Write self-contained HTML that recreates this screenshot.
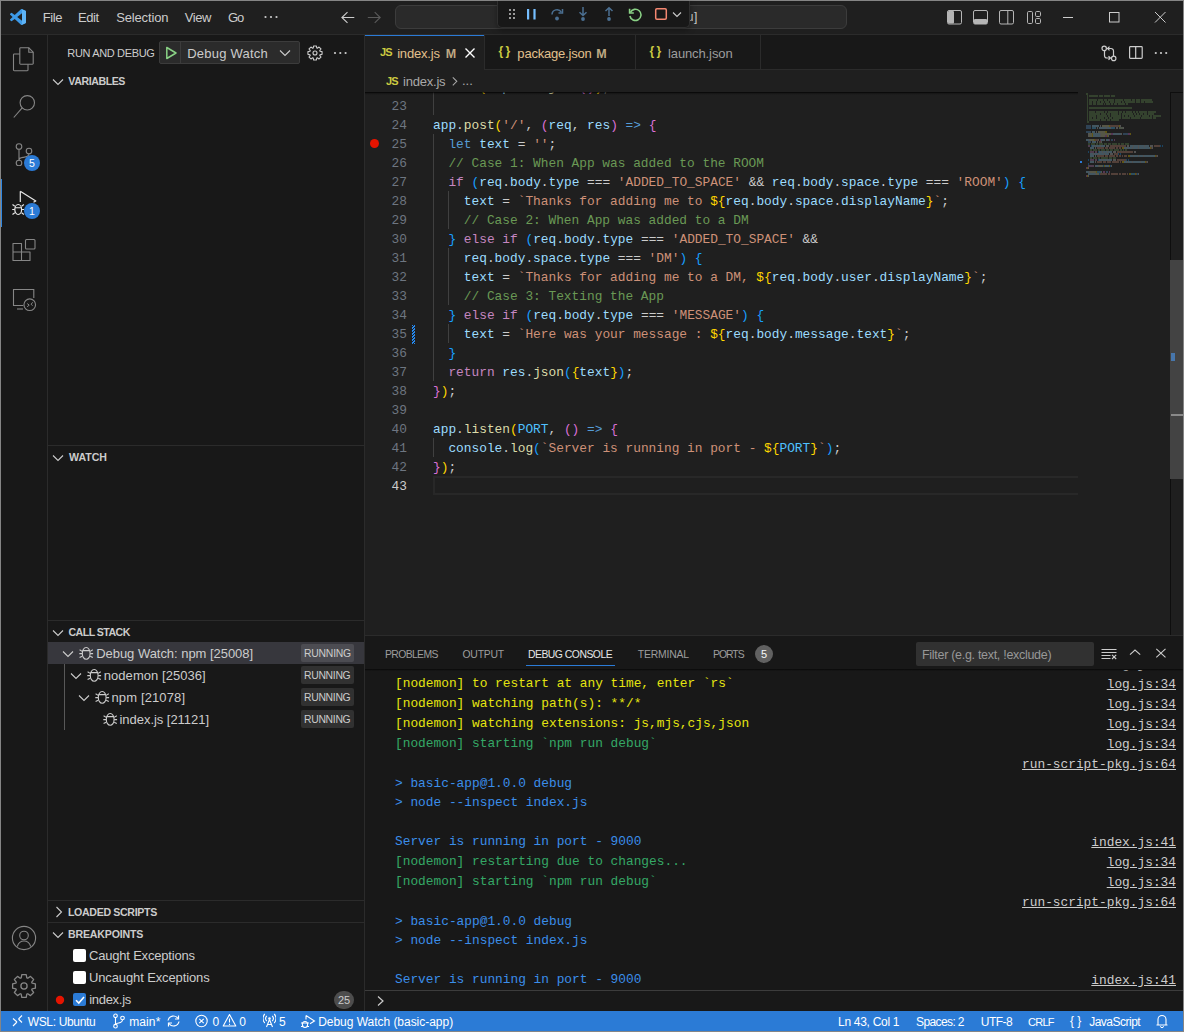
<!DOCTYPE html><html><head><meta charset="utf-8"><style>
html,body{margin:0;padding:0;}body{width:1184px;height:1032px;position:relative;overflow:hidden;background:#858585;font-family:"Liberation Sans",sans-serif;}
div{box-sizing:border-box;}
</style></head><body>
<div style="position:absolute;left:1px;top:1px;width:1182px;height:1030px;background:#181818;"></div>
<div style="position:absolute;left:1px;top:1px;width:1182px;height:33px;background:#1f1f1f;"></div>
<div style="position:absolute;left:1px;top:34px;width:1182px;height:1px;background:#2b2b2b;"></div>
<div style="position:absolute;left:47px;top:35px;width:1px;height:976px;background:#2b2b2b;"></div>
<div style="position:absolute;left:364px;top:35px;width:1px;height:976px;background:#2b2b2b;"></div>
<div style="position:absolute;left:365px;top:35px;width:818px;height:600px;background:#1f1f1f;"></div>
<div style="position:absolute;left:365px;top:635px;width:818px;height:1px;background:#2b2b2b;"></div>
<div style="position:absolute;left:365px;top:636px;width:818px;height:375px;background:#181818;"></div>
<div style="position:absolute;left:1px;top:1011px;width:1182px;height:20px;background:#2b7bd6;"></div>
<svg style="position:absolute;left:10px;top:9px;" width="16" height="16" viewBox="0 0 100 100"><path fill="#3d9ae8" d="M96.46 10.8 75.86.87a6.23 6.23 0 0 0-7.1 1.2L29.35 38.04 12.17 25a4.16 4.16 0 0 0-5.32.24L1.34 30.25a4.16 4.16 0 0 0 0 6.15L16.24 50 1.34 63.6a4.16 4.16 0 0 0 0 6.15l5.51 5.01a4.16 4.16 0 0 0 5.32.24l17.18-13.04 39.41 35.96a6.23 6.23 0 0 0 7.1 1.2l20.6-9.91a6.24 6.24 0 0 0 3.54-5.62V16.42a6.24 6.24 0 0 0-3.54-5.62zM75.01 72.7 45.11 50l29.9-22.7z"/><path fill="#5db3f5" d="M68.76 2.07a6.23 6.23 0 0 1 7.1-1.2l20.6 9.93a6.24 6.24 0 0 1 3.54 5.62v67.16a6.24 6.24 0 0 1-3.54 5.62l-20.6 9.91a6.23 6.23 0 0 1-7.1-1.2 3.66 3.66 0 0 0 6.25-2.58V4.66a3.66 3.66 0 0 0-6.25-2.59z"/></svg>
<div id="t1" style="position:absolute;left:42.66px;top:11px;white-space:pre;font-family:'Liberation Sans', sans-serif;font-size:13px;line-height:13px;color:#cccccc;font-weight:normal;letter-spacing:-0.337px;">File</div>
<div id="t2" style="position:absolute;left:78.01px;top:11px;white-space:pre;font-family:'Liberation Sans', sans-serif;font-size:13px;line-height:13px;color:#cccccc;font-weight:normal;letter-spacing:-0.390px;">Edit</div>
<div id="t3" style="position:absolute;left:116.19px;top:11px;white-space:pre;font-family:'Liberation Sans', sans-serif;font-size:13px;line-height:13px;color:#cccccc;font-weight:normal;letter-spacing:-0.150px;">Selection</div>
<div id="t4" style="position:absolute;left:184.84px;top:11px;white-space:pre;font-family:'Liberation Sans', sans-serif;font-size:13px;line-height:13px;color:#cccccc;font-weight:normal;letter-spacing:-0.500px;">View</div>
<div id="t5" style="position:absolute;left:228.00px;top:11px;white-space:pre;font-family:'Liberation Sans', sans-serif;font-size:13px;line-height:13px;color:#cccccc;font-weight:normal;letter-spacing:-1.000px;">Go</div>
<svg style="position:absolute;left:263px;top:15px;" width="16" height="4" viewBox="0 0 16 4"><circle cx="2.5" cy="2" r="1.1" fill="#cccccc"/><circle cx="8" cy="2" r="1.1" fill="#cccccc"/><circle cx="13.5" cy="2" r="1.1" fill="#cccccc"/></svg>
<svg style="position:absolute;left:339px;top:9px;" width="16" height="16" viewBox="0 0 16 16"><path d="M15.3 8.5H2.8M8.5 3.2 2.9 8.5 8.5 13.8" fill="none" stroke="#cccccc" stroke-width="1.1"/></svg>
<svg style="position:absolute;left:366px;top:9px;" width="16" height="16" viewBox="0 0 16 16"><path d="M1.8 8.5h12.3M8.7 3.2l5.5 5.3-5.5 5.3" fill="none" stroke="#5a5a5a" stroke-width="1.1"/></svg>
<div style="position:absolute;left:395px;top:5px;width:452px;height:24px;background:#2a2a2a;border:1px solid #3c3c3c;border-radius:6px;"></div>
<div id="t6" style="position:absolute;left:551.30px;top:11px;white-space:pre;font-family:'Liberation Sans', sans-serif;font-size:12px;line-height:12px;color:#cccccc;font-weight:normal;letter-spacing:0.577px;">basic-app [WSL: Ubuntu]</div>
<div style="position:absolute;left:497px;top:1px;width:193px;height:27px;background:#181818;border:1px solid #2f2f2f;border-top:none;border-radius:0 0 5px 5px;box-shadow:0 2px 6px rgba(0,0,0,0.36);"></div>
<svg style="position:absolute;left:509px;top:9px;" width="6" height="10" viewBox="0 0 6 10"><rect x="0" y="0" width="2" height="2" fill="#9a9a9a"/><rect x="0" y="4" width="2" height="2" fill="#9a9a9a"/><rect x="0" y="8" width="2" height="2" fill="#9a9a9a"/><rect x="4" y="0" width="2" height="2" fill="#9a9a9a"/><rect x="4" y="4" width="2" height="2" fill="#9a9a9a"/><rect x="4" y="8" width="2" height="2" fill="#9a9a9a"/></svg>
<svg style="position:absolute;left:527px;top:9px;" width="10" height="11" viewBox="0 0 10 11"><rect x="0" y="0" width="2.2" height="10.5" fill="#75beff"/><rect x="6.4" y="0" width="2.2" height="10.5" fill="#75beff"/></svg>
<svg style="position:absolute;left:549px;top:6px;" width="16" height="16" viewBox="0 0 16 16"><path d="M3 8.5a5 5 0 0 1 9.3-2.3" fill="none" stroke="#4b6f91" stroke-width="1.5"/><path d="M13.5 3v4h-4" fill="none" stroke="#4b6f91" stroke-width="1.5"/><circle cx="8" cy="12.5" r="1.9" fill="#4b6f91"/></svg>
<svg style="position:absolute;left:575px;top:6px;" width="16" height="16" viewBox="0 0 16 16"><path d="M8 1v8.5M4.5 6.2 8 9.5l3.5-3.3" fill="none" stroke="#4b6f91" stroke-width="1.5"/><circle cx="8" cy="13" r="1.9" fill="#4b6f91"/></svg>
<svg style="position:absolute;left:601px;top:6px;" width="16" height="16" viewBox="0 0 16 16"><path d="M8 10V1.5M4.5 5 8 1.7 11.5 5" fill="none" stroke="#4b6f91" stroke-width="1.5"/><circle cx="8" cy="13" r="1.9" fill="#4b6f91"/></svg>
<svg style="position:absolute;left:627px;top:6px;" width="16" height="16" viewBox="0 0 16 16"><path d="M3.3 6.5A5.6 5.6 0 1 1 2.9 10" fill="none" stroke="#89d185" stroke-width="1.6"/><path d="M2.6 2.8v4.2h4.2" fill="none" stroke="#89d185" stroke-width="1.6"/></svg>
<svg style="position:absolute;left:653px;top:6px;" width="16" height="16" viewBox="0 0 16 16"><rect x="2.7" y="2.7" width="10.6" height="10.6" rx="1.2" fill="none" stroke="#f48771" stroke-width="1.5"/></svg>
<svg style="position:absolute;left:672px;top:9px;" width="10" height="10" viewBox="0 0 10 10"><path d="M1 3.5 5 7.5 9 3.5" fill="none" stroke="#cccccc" stroke-width="1.1"/></svg>
<svg style="position:absolute;left:947px;top:10px;" width="16" height="15" viewBox="0 0 16 15"><rect x="0.5" y="0.5" width="14" height="13.5" rx="1.5" fill="none" stroke="#b5b5b5" stroke-width="1"/><rect x="1" y="1" width="6" height="12.5" rx="1" fill="#b5b5b5"/></svg>
<svg style="position:absolute;left:973px;top:10px;" width="16" height="15" viewBox="0 0 16 15"><rect x="0.5" y="0.5" width="14" height="13.5" rx="1.5" fill="none" stroke="#b5b5b5" stroke-width="1"/><rect x="1" y="9" width="13" height="5" rx="1" fill="#b5b5b5"/></svg>
<svg style="position:absolute;left:999px;top:10px;" width="16" height="15" viewBox="0 0 16 15"><rect x="0.5" y="0.5" width="14" height="13.5" rx="1.5" fill="none" stroke="#b5b5b5" stroke-width="1"/><path d="M8.8 1v13" stroke="#b5b5b5" stroke-width="1"/></svg>
<svg style="position:absolute;left:1026px;top:10px;" width="16" height="15" viewBox="0 0 16 15"><rect x="1.5" y="1.5" width="5" height="12" rx="1.2" fill="none" stroke="#b5b5b5" stroke-width="1"/><rect x="9.5" y="1.5" width="5" height="5" rx="1.2" fill="none" stroke="#b5b5b5" stroke-width="1"/><rect x="9.5" y="8.5" width="5" height="5" rx="1.2" fill="none" stroke="#b5b5b5" stroke-width="1"/></svg>
<svg style="position:absolute;left:1062px;top:10px;" width="12" height="12" viewBox="0 0 12 12"><path d="M1 7.5h10" stroke="#cccccc" stroke-width="1"/></svg>
<svg style="position:absolute;left:1108px;top:11px;" width="12" height="12" viewBox="0 0 12 12"><rect x="1.5" y="1.5" width="9.5" height="9.5" fill="none" stroke="#cccccc" stroke-width="1"/></svg>
<svg style="position:absolute;left:1154px;top:11px;" width="12" height="12" viewBox="0 0 12 12"><path d="M1 1l10.5 10.5M11.5 1 1 11.5" stroke="#cccccc" stroke-width="1"/></svg>
<svg style="position:absolute;left:12px;top:46px;" width="24" height="26" viewBox="0 0 24 26"><path d="M8.6 1.8h8.2l4.4 4.4V17.4a.8.8 0 0 1-.8.8H8.6a.8.8 0 0 1-.8-.8V2.6a.8.8 0 0 1 .8-.8z" fill="none" stroke="#868686" stroke-width="1.1"/><path d="M16.8 1.8v4.4h4.4" fill="none" stroke="#868686" stroke-width="1.1"/><path d="M7.8 8H2.3a.8.8 0 0 0-.8.8V23.9a.8.8 0 0 0 .8.8h12.9a.8.8 0 0 0 .8-.8v-5.7" fill="none" stroke="#868686" stroke-width="1.1"/></svg>
<svg style="position:absolute;left:12px;top:94px;" width="24" height="26" viewBox="0 0 24 26"><circle cx="15.3" cy="8.8" r="7.2" fill="none" stroke="#868686" stroke-width="1.1"/><path d="M10.4 13.7 1.8 23.5" stroke="#868686" stroke-width="1.1"/></svg>
<svg style="position:absolute;left:12px;top:140px;" width="24" height="26" viewBox="0 0 24 26"><circle cx="7" cy="6.5" r="2.8" fill="none" stroke="#868686" stroke-width="1.1"/><circle cx="17" cy="11" r="2.8" fill="none" stroke="#868686" stroke-width="1.1"/><circle cx="7" cy="23" r="2.8" fill="none" stroke="#868686" stroke-width="1.1"/><path d="M7 9.3V20.2M17 13.8c0 3-3 3.2-6 3.6-2.5.3-4 1.4-4 2.8" fill="none" stroke="#868686" stroke-width="1.1"/></svg>
<div style="position:absolute;left:24px;top:155px;width:16px;height:16px;background:#2b7bd6;border-radius:50%;"><div style="position:absolute;left:0;top:0;width:16px;height:16px;text-align:center;font:10.5px/16px 'Liberation Sans',sans-serif;color:#fff;">5</div></div>
<div style="position:absolute;left:1px;top:179px;width:1px;height:48px;background:#3087e0;"></div>
<svg style="position:absolute;left:10px;top:188px;" width="30" height="34" viewBox="0 0 30 34"><path d="M10.3 3.3v10.6M10.3 3.3 25.8 13 23.5 14.3" fill="none" stroke="#e8e8e8" stroke-width="1.2" stroke-linejoin="round"/><ellipse cx="8.2" cy="21.5" rx="3.4" ry="5" fill="none" stroke="#e8e8e8" stroke-width="1.2"/><path d="M5 19.8h6.4M2.5 16.5l2.3 1.8M13.9 16.5l-2.3 1.8M2.2 21.5h2.6M14.2 21.5h-2.6M2.5 26.5l2.3-1.8M13.9 26.5l-2.3-1.8" fill="none" stroke="#e8e8e8" stroke-width="1.1"/></svg>
<div style="position:absolute;left:24px;top:203px;width:16px;height:16px;background:#2b7bd6;border-radius:50%;"><div style="position:absolute;left:0;top:0;width:16px;height:16px;text-align:center;font:10.5px/16px 'Liberation Sans',sans-serif;color:#fff;">1</div></div>
<svg style="position:absolute;left:12px;top:238px;" width="26" height="26" viewBox="0 0 26 26"><path d="M1 5.5h8.5v8.5H1zM1 14h8.5v8.5H1zM9.5 14H18v8.5H9.5z" fill="none" stroke="#868686" stroke-width="1.1" stroke-linejoin="round"/><rect x="13.5" y="1.5" width="9.5" height="9.5" rx="1" fill="none" stroke="#868686" stroke-width="1.1"/></svg>
<svg style="position:absolute;left:12px;top:288px;" width="26" height="26" viewBox="0 0 26 26"><path d="M11.3 17.5H1.5V1.5h20.3v8.4" fill="none" stroke="#868686" stroke-width="1.1"/><path d="M5 21h6" stroke="#868686" stroke-width="1.1"/><circle cx="17.75" cy="16.7" r="5.8" fill="none" stroke="#868686" stroke-width="1.1"/><path d="M15.2 15.6l2 1.4-2 2M20.6 14.3l-1.5 2 1.5 1.3" fill="none" stroke="#868686" stroke-width="1"/></svg>
<svg style="position:absolute;left:11px;top:925px;" width="26" height="26" viewBox="0 0 26 26"><circle cx="13" cy="13" r="11.6" fill="none" stroke="#868686" stroke-width="1.1"/><circle cx="13" cy="10.5" r="4.3" fill="none" stroke="#868686" stroke-width="1.1"/><path d="M6.3 21.5c1-3.3 3.5-5.5 6.7-5.5s5.7 2.2 6.7 5.5" fill="none" stroke="#868686" stroke-width="1.1"/></svg>
<svg style="position:absolute;left:11px;top:973px;" width="26" height="26" viewBox="0 0 26 26"><polygon points="10.20,4.87 10.79,1.61 15.21,1.61 15.80,4.87 16.77,5.27 19.49,3.38 22.62,6.51 20.73,9.23 21.13,10.20 24.39,10.79 24.39,15.21 21.13,15.80 20.73,16.77 22.62,19.49 19.49,22.62 16.77,20.73 15.80,21.13 15.21,24.39 10.79,24.39 10.20,21.13 9.23,20.73 6.51,22.62 3.38,19.49 5.27,16.77 4.87,15.80 1.61,15.21 1.61,10.79 4.87,10.20 5.27,9.23 3.38,6.51 6.51,3.38 9.23,5.27" fill="none" stroke="#868686" stroke-width="1.3" stroke-linejoin="round"/><circle cx="13" cy="13" r="3.1" fill="none" stroke="#868686" stroke-width="1.3"/></svg>
<div id="t7" style="position:absolute;left:67.33px;top:48px;white-space:pre;font-family:'Liberation Sans', sans-serif;font-size:11px;line-height:11px;color:#cccccc;font-weight:normal;letter-spacing:-0.350px;">RUN AND DEBUG</div>
<div style="position:absolute;left:159px;top:41px;width:141px;height:23px;background:#2b2b2b;border:1px solid #3c3c3c;border-radius:2px;"></div>
<div style="position:absolute;left:180px;top:42px;width:1px;height:21px;background:#3c3c3c;"></div>
<svg style="position:absolute;left:165px;top:46px;" width="13" height="14" viewBox="0 0 13 14"><path d="M1.8 1.5v11l9.2-5.5z" fill="none" stroke="#89d185" stroke-width="1.5" stroke-linejoin="round"/></svg>
<div id="t8" style="position:absolute;left:187.18px;top:46.5px;white-space:pre;font-family:'Liberation Sans', sans-serif;font-size:13px;line-height:13px;color:#cccccc;font-weight:normal;letter-spacing:0.232px;">Debug Watch</div>
<svg style="position:absolute;left:279px;top:48px;" width="13" height="10" viewBox="0 0 13 10"><path d="M1 2.5 6 7.5 11 2.5" fill="none" stroke="#cccccc" stroke-width="1.1"/></svg>
<svg style="position:absolute;left:307px;top:45px;" width="16" height="16" viewBox="0 0 16 16"><polygon points="6.27,2.99 6.63,0.93 9.37,0.93 9.73,2.99 10.32,3.24 12.03,2.03 13.97,3.97 12.76,5.68 13.01,6.27 15.07,6.63 15.07,9.37 13.01,9.73 12.76,10.32 13.97,12.03 12.03,13.97 10.32,12.76 9.73,13.01 9.37,15.07 6.63,15.07 6.27,13.01 5.68,12.76 3.97,13.97 2.03,12.03 3.24,10.32 2.99,9.73 0.93,9.37 0.93,6.63 2.99,6.27 3.24,5.68 2.03,3.97 3.97,2.03 5.68,3.24" fill="none" stroke="#cccccc" stroke-width="1.1" stroke-linejoin="round"/><circle cx="8" cy="8" r="2" fill="none" stroke="#cccccc" stroke-width="1.1"/></svg>
<svg style="position:absolute;left:333px;top:51px;" width="16" height="4" viewBox="0 0 16 4"><circle cx="2" cy="2" r="1.1" fill="#cccccc"/><circle cx="7.3" cy="2" r="1.1" fill="#cccccc"/><circle cx="12.6" cy="2" r="1.1" fill="#cccccc"/></svg>
<svg style="position:absolute;left:52px;top:78px;" width="12" height="8" viewBox="0 0 12 8"><path d="M1 1.5 6 6.5 11 1.5" fill="none" stroke="#cccccc" stroke-width="1.1"/></svg>
<div id="t9" style="position:absolute;left:68.33px;top:76px;white-space:pre;font-family:'Liberation Sans', sans-serif;font-size:10.6px;line-height:10.6px;color:#cccccc;font-weight:bold;letter-spacing:-0.415px;">VARIABLES</div>
<div style="position:absolute;left:48px;top:445px;width:316px;height:1px;background:#2b2b2b;"></div>
<svg style="position:absolute;left:52px;top:454px;" width="12" height="8" viewBox="0 0 12 8"><path d="M1 1.5 6 6.5 11 1.5" fill="none" stroke="#cccccc" stroke-width="1.1"/></svg>
<div id="t10" style="position:absolute;left:68.99px;top:452px;white-space:pre;font-family:'Liberation Sans', sans-serif;font-size:10.6px;line-height:10.6px;color:#cccccc;font-weight:bold;letter-spacing:-0.003px;">WATCH</div>
<div style="position:absolute;left:48px;top:620px;width:316px;height:1px;background:#2b2b2b;"></div>
<svg style="position:absolute;left:52px;top:629px;" width="12" height="8" viewBox="0 0 12 8"><path d="M1 1.5 6 6.5 11 1.5" fill="none" stroke="#cccccc" stroke-width="1.1"/></svg>
<div id="t11" style="position:absolute;left:68.49px;top:627px;white-space:pre;font-family:'Liberation Sans', sans-serif;font-size:10.6px;line-height:10.6px;color:#cccccc;font-weight:bold;letter-spacing:-0.536px;">CALL STACK</div>
<div style="position:absolute;left:48px;top:642px;width:316px;height:22px;background:#37373d;"></div>
<div style="position:absolute;left:64px;top:664px;width:1px;height:66px;background:#585858;"></div>
<svg style="position:absolute;left:62px;top:650px;" width="12" height="8" viewBox="0 0 12 8"><path d="M1 1.5 6 6.5 11 1.5" fill="none" stroke="#cccccc" stroke-width="1.1"/></svg>
<svg style="position:absolute;left:79px;top:646px;" width="15" height="15" viewBox="0 0 15 15"><ellipse cx="7.2" cy="7.4" rx="3.9" ry="5.9" fill="none" stroke="#cccccc" stroke-width="1.1"/><path d="M3.6 4.6h7.2M0.6 3.8l2.6 1.6M13.8 3.8l-2.6 1.6M0.3 7.6h2.9M14.1 7.6h-2.9M0.6 11.6l2.6-1.4M13.8 11.6l-2.6-1.4" fill="none" stroke="#cccccc" stroke-width="1.1"/></svg>
<div id="t12" style="position:absolute;left:96.20px;top:646.5px;white-space:pre;font-family:'Liberation Sans', sans-serif;font-size:13px;line-height:13px;color:#cccccc;font-weight:normal;letter-spacing:-0.037px;">Debug Watch: npm [25008]</div>
<div style="position:absolute;left:301px;top:644px;width:53px;height:18px;background:rgba(255,255,255,0.11);border-radius:2px;"></div>
<div id="t13" style="position:absolute;left:304.01px;top:648.5px;white-space:pre;font-family:'Liberation Sans', sans-serif;font-size:10.4px;line-height:10.4px;color:#cccccc;font-weight:normal;letter-spacing:-0.222px;">RUNNING</div>
<svg style="position:absolute;left:70px;top:672px;" width="12" height="8" viewBox="0 0 12 8"><path d="M1 1.5 6 6.5 11 1.5" fill="none" stroke="#cccccc" stroke-width="1.1"/></svg>
<svg style="position:absolute;left:87px;top:668px;" width="15" height="15" viewBox="0 0 15 15"><ellipse cx="7.2" cy="7.4" rx="3.9" ry="5.9" fill="none" stroke="#cccccc" stroke-width="1.1"/><path d="M3.6 4.6h7.2M0.6 3.8l2.6 1.6M13.8 3.8l-2.6 1.6M0.3 7.6h2.9M14.1 7.6h-2.9M0.6 11.6l2.6-1.4M13.8 11.6l-2.6-1.4" fill="none" stroke="#cccccc" stroke-width="1.1"/></svg>
<div id="t14" style="position:absolute;left:103.80px;top:668.5px;white-space:pre;font-family:'Liberation Sans', sans-serif;font-size:13px;line-height:13px;color:#cccccc;font-weight:normal;letter-spacing:0.046px;">nodemon [25036]</div>
<div style="position:absolute;left:301px;top:666px;width:53px;height:18px;background:rgba(255,255,255,0.11);border-radius:2px;"></div>
<div id="t15" style="position:absolute;left:304.01px;top:670.5px;white-space:pre;font-family:'Liberation Sans', sans-serif;font-size:10.4px;line-height:10.4px;color:#cccccc;font-weight:normal;letter-spacing:-0.305px;">RUNNING</div>
<svg style="position:absolute;left:78px;top:694px;" width="12" height="8" viewBox="0 0 12 8"><path d="M1 1.5 6 6.5 11 1.5" fill="none" stroke="#cccccc" stroke-width="1.1"/></svg>
<svg style="position:absolute;left:95px;top:690px;" width="15" height="15" viewBox="0 0 15 15"><ellipse cx="7.2" cy="7.4" rx="3.9" ry="5.9" fill="none" stroke="#cccccc" stroke-width="1.1"/><path d="M3.6 4.6h7.2M0.6 3.8l2.6 1.6M13.8 3.8l-2.6 1.6M0.3 7.6h2.9M14.1 7.6h-2.9M0.6 11.6l2.6-1.4M13.8 11.6l-2.6-1.4" fill="none" stroke="#cccccc" stroke-width="1.1"/></svg>
<div id="t16" style="position:absolute;left:111.50px;top:690.5px;white-space:pre;font-family:'Liberation Sans', sans-serif;font-size:13px;line-height:13px;color:#cccccc;font-weight:normal;letter-spacing:0.125px;">npm [21078]</div>
<div style="position:absolute;left:301px;top:688px;width:53px;height:18px;background:rgba(255,255,255,0.11);border-radius:2px;"></div>
<div id="t17" style="position:absolute;left:304.01px;top:692.5px;white-space:pre;font-family:'Liberation Sans', sans-serif;font-size:10.4px;line-height:10.4px;color:#cccccc;font-weight:normal;letter-spacing:-0.305px;">RUNNING</div>
<svg style="position:absolute;left:103px;top:712px;" width="15" height="15" viewBox="0 0 15 15"><ellipse cx="7.2" cy="7.4" rx="3.9" ry="5.9" fill="none" stroke="#cccccc" stroke-width="1.1"/><path d="M3.6 4.6h7.2M0.6 3.8l2.6 1.6M13.8 3.8l-2.6 1.6M0.3 7.6h2.9M14.1 7.6h-2.9M0.6 11.6l2.6-1.4M13.8 11.6l-2.6-1.4" fill="none" stroke="#cccccc" stroke-width="1.1"/></svg>
<div id="t18" style="position:absolute;left:119.50px;top:712.5px;white-space:pre;font-family:'Liberation Sans', sans-serif;font-size:13px;line-height:13px;color:#cccccc;font-weight:normal;letter-spacing:-0.037px;">index.js [21121]</div>
<div style="position:absolute;left:301px;top:710px;width:53px;height:18px;background:rgba(255,255,255,0.11);border-radius:2px;"></div>
<div id="t19" style="position:absolute;left:304.01px;top:714.5px;white-space:pre;font-family:'Liberation Sans', sans-serif;font-size:10.4px;line-height:10.4px;color:#cccccc;font-weight:normal;letter-spacing:-0.305px;">RUNNING</div>
<div style="position:absolute;left:48px;top:900px;width:316px;height:1px;background:#2b2b2b;"></div>
<svg style="position:absolute;left:55px;top:906px;" width="8" height="12" viewBox="0 0 8 12"><path d="M1.5 1 6.5 6 1.5 11" fill="none" stroke="#cccccc" stroke-width="1.1"/></svg>
<div id="t20" style="position:absolute;left:67.99px;top:907px;white-space:pre;font-family:'Liberation Sans', sans-serif;font-size:10.6px;line-height:10.6px;color:#cccccc;font-weight:bold;letter-spacing:-0.334px;">LOADED SCRIPTS</div>
<div style="position:absolute;left:48px;top:922px;width:316px;height:1px;background:#2b2b2b;"></div>
<svg style="position:absolute;left:52px;top:931px;" width="12" height="8" viewBox="0 0 12 8"><path d="M1 1.5 6 6.5 11 1.5" fill="none" stroke="#cccccc" stroke-width="1.1"/></svg>
<div id="t21" style="position:absolute;left:67.99px;top:929px;white-space:pre;font-family:'Liberation Sans', sans-serif;font-size:10.6px;line-height:10.6px;color:#cccccc;font-weight:bold;letter-spacing:-0.166px;">BREAKPOINTS</div>
<div style="position:absolute;left:73px;top:948.5px;width:13px;height:13px;background:#ffffff;border-radius:2px;"></div>
<div id="t22" style="position:absolute;left:88.99px;top:948.5px;white-space:pre;font-family:'Liberation Sans', sans-serif;font-size:13px;line-height:13px;color:#cccccc;font-weight:normal;letter-spacing:-0.197px;">Caught Exceptions</div>
<div style="position:absolute;left:73px;top:970.5px;width:13px;height:13px;background:#ffffff;border-radius:2px;"></div>
<div id="t23" style="position:absolute;left:88.99px;top:970.5px;white-space:pre;font-family:'Liberation Sans', sans-serif;font-size:13px;line-height:13px;color:#cccccc;font-weight:normal;letter-spacing:-0.121px;">Uncaught Exceptions</div>
<svg style="position:absolute;left:55px;top:995px;" width="10" height="10" viewBox="0 0 10 10"><circle cx="5" cy="5" r="4.2" fill="#e51400"/></svg>
<div style="position:absolute;left:73px;top:992.5px;width:13px;height:13px;background:#2b7bd6;border-radius:2px;"><svg style="position:absolute;left:1px;top:1px" width="12" height="12" viewBox="0 0 12 12"><path d="M2 6.2 4.8 9 10 3" fill="none" stroke="#ffffff" stroke-width="1.6"/></svg></div>
<div id="t24" style="position:absolute;left:89.19px;top:992.5px;white-space:pre;font-family:'Liberation Sans', sans-serif;font-size:13px;line-height:13px;color:#cccccc;font-weight:normal;letter-spacing:-0.290px;">index.js</div>
<div style="position:absolute;left:334px;top:991px;width:20px;height:18px;background:#4d4d4d;border-radius:9px;"><div style="position:absolute;left:0;top:0;width:20px;text-align:center;font:11px/18px 'Liberation Sans',sans-serif;color:#cccccc;">25</div></div>
<div style="position:absolute;left:365px;top:35px;width:818px;height:35px;background:#181818;"></div>
<div style="position:absolute;left:365px;top:69px;width:818px;height:1px;background:#2b2b2b;"></div>
<div style="position:absolute;left:365px;top:35px;width:119px;height:35px;background:#1f1f1f;"></div>
<div style="position:absolute;left:365px;top:35px;width:119px;height:1px;background:#2b7bd6;"></div>
<div style="position:absolute;left:484px;top:35px;width:1px;height:34px;background:#2b2b2b;"></div>
<div style="position:absolute;left:635px;top:35px;width:1px;height:34px;background:#2b2b2b;"></div>
<div style="position:absolute;left:760px;top:35px;width:1px;height:34px;background:#2b2b2b;"></div>
<div style="position:absolute;left:380.00px;top:47px;white-space:pre;font-family:'Liberation Sans', sans-serif;font-size:11px;line-height:11px;color:#cbcb41;font-weight:bold;letter-spacing:-0.9px;">JS</div>
<div id="t25" style="position:absolute;left:397.15px;top:46.5px;white-space:pre;font-family:'Liberation Sans', sans-serif;font-size:13px;line-height:13px;color:#e2c08d;font-weight:normal;letter-spacing:-0.187px;">index.js</div>
<div id="t26" style="position:absolute;left:445.67px;top:47.5px;white-space:pre;font-family:'Liberation Sans', sans-serif;font-size:12.5px;line-height:12.5px;color:#bfa983;font-weight:bold;letter-spacing:0.000px;">M</div>
<svg style="position:absolute;left:464px;top:47px;" width="12" height="12" viewBox="0 0 12 12"><path d="M1.5 1.5l9 9M10.5 1.5l-9 9" stroke="#ffffff" stroke-width="1.4"/></svg>
<div style="position:absolute;left:498.50px;top:45px;white-space:pre;font-family:'Liberation Sans', sans-serif;font-size:12px;line-height:12px;color:#cbcb41;font-weight:bold;letter-spacing:-0.5px;">{ }</div>
<div id="t27" style="position:absolute;left:517.35px;top:46.5px;white-space:pre;font-family:'Liberation Sans', sans-serif;font-size:13px;line-height:13px;color:#e2c08d;font-weight:normal;letter-spacing:-0.197px;">package.json</div>
<div id="t28" style="position:absolute;left:596.18px;top:47.5px;white-space:pre;font-family:'Liberation Sans', sans-serif;font-size:12.5px;line-height:12.5px;color:#bfa983;font-weight:bold;letter-spacing:0.000px;">M</div>
<div style="position:absolute;left:649.50px;top:45px;white-space:pre;font-family:'Liberation Sans', sans-serif;font-size:12px;line-height:12px;color:#cbcb41;font-weight:bold;letter-spacing:-0.5px;">{ }</div>
<div id="t29" style="position:absolute;left:668.00px;top:46.5px;white-space:pre;font-family:'Liberation Sans', sans-serif;font-size:13px;line-height:13px;color:#9d9d9d;font-weight:normal;letter-spacing:-0.114px;">launch.json</div>
<svg style="position:absolute;left:1098px;top:42px;" width="20" height="20" viewBox="0 0 20 20"><circle cx="6.2" cy="6.4" r="2.2" fill="none" stroke="#cccccc" stroke-width="1.2"/><circle cx="15.7" cy="16.4" r="2.2" fill="none" stroke="#cccccc" stroke-width="1.2"/><path d="M6.5 8.6V13.5a2.5 2.5 0 0 0 2.5 2.5H12.5M10.5 14.1l2 1.9-2 1.9M15.5 14.2V9a2.5 2.5 0 0 0-2.5-2.5H9.5M11.5 4.6 9.5 6.5l2 1.9" fill="none" stroke="#cccccc" stroke-width="1.2"/></svg>
<svg style="position:absolute;left:1127px;top:44px;" width="18" height="18" viewBox="0 0 18 18"><rect x="2.6" y="2.6" width="12.6" height="11.8" rx="0.8" fill="none" stroke="#cccccc" stroke-width="1.2"/><path d="M8.7 2.6v11.8" stroke="#cccccc" stroke-width="1.2"/></svg>
<svg style="position:absolute;left:1153px;top:51px;" width="16" height="4" viewBox="0 0 16 4"><circle cx="2.8" cy="2" r="1.1" fill="#cccccc"/><circle cx="8" cy="2" r="1.1" fill="#cccccc"/><circle cx="13.2" cy="2" r="1.1" fill="#cccccc"/></svg>
<div style="position:absolute;left:386.00px;top:76px;white-space:pre;font-family:'Liberation Sans', sans-serif;font-size:11px;line-height:11px;color:#cbcb41;font-weight:bold;letter-spacing:-0.9px;">JS</div>
<div id="t30" style="position:absolute;left:403.00px;top:74.5px;white-space:pre;font-family:'Liberation Sans', sans-serif;font-size:13px;line-height:13px;color:#a9a9a9;font-weight:normal;letter-spacing:-0.216px;">index.js</div>
<svg style="position:absolute;left:451px;top:76px;" width="8" height="12" viewBox="0 0 8 12"><path d="M1.8 1.3 5.8 5.3 1.8 9.3" fill="none" stroke="#a9a9a9" stroke-width="1.1"/></svg>
<div style="position:absolute;left:462.00px;top:74px;white-space:pre;font-family:'Liberation Sans', sans-serif;font-size:13px;line-height:13px;color:#a9a9a9;font-weight:normal;">...</div>
<div style="position:absolute;left:365px;top:92px;width:805px;height:543px;overflow:hidden;">
<div style="position:absolute;left:68px;top:384px;width:645px;height:19px;border:2px solid #282828;border-right:none;box-sizing:border-box;"></div>
<div style="position:absolute;left:68.00px;top:-15px;width:1px;height:38px;background:#404040;"></div>
<div style="position:absolute;left:68.00px;top:42px;width:1px;height:247px;background:#404040;"></div>
<div style="position:absolute;left:83.40px;top:99px;width:1px;height:38px;background:#404040;"></div>
<div style="position:absolute;left:83.40px;top:156px;width:1px;height:57px;background:#404040;"></div>
<div style="position:absolute;left:83.40px;top:232px;width:1px;height:19px;background:#404040;"></div>
<div style="position:absolute;left:68.00px;top:346px;width:1px;height:19px;background:#404040;"></div>
<div style="position:absolute;left:0px;top:-14px;width:42px;text-align:right;font-family:'Liberation Mono', monospace;font-size:12.83px;line-height:19px;color:#6e7681;white-space:pre;">22</div>
<div style="position:absolute;left:68px;top:-14px;font-family:'Liberation Mono', monospace;font-size:12.83px;line-height:19px;white-space:pre;"><span style="color:#cccccc">  .</span><span style="color:#dcdcaa">use</span><span style="color:#ffd700">(</span><span style="color:#9cdcfe">express</span><span style="color:#cccccc">.</span><span style="color:#dcdcaa">json</span><span style="color:#da70d6">()</span><span style="color:#ffd700">)</span><span style="color:#cccccc">;</span></div>
<div style="position:absolute;left:0px;top:5px;width:42px;text-align:right;font-family:'Liberation Mono', monospace;font-size:12.83px;line-height:19px;color:#6e7681;white-space:pre;">23</div>
<div style="position:absolute;left:0px;top:24px;width:42px;text-align:right;font-family:'Liberation Mono', monospace;font-size:12.83px;line-height:19px;color:#6e7681;white-space:pre;">24</div>
<div style="position:absolute;left:68px;top:24px;font-family:'Liberation Mono', monospace;font-size:12.83px;line-height:19px;white-space:pre;"><span style="color:#9cdcfe">app</span><span style="color:#cccccc">.</span><span style="color:#dcdcaa">post</span><span style="color:#ffd700">(</span><span style="color:#ce9178">&#x27;/&#x27;</span><span style="color:#cccccc">, </span><span style="color:#da70d6">(</span><span style="color:#9cdcfe">req</span><span style="color:#cccccc">, </span><span style="color:#9cdcfe">res</span><span style="color:#da70d6">)</span><span style="color:#cccccc"> </span><span style="color:#569cd6">=&gt;</span><span style="color:#cccccc"> </span><span style="color:#da70d6">{</span></div>
<div style="position:absolute;left:0px;top:43px;width:42px;text-align:right;font-family:'Liberation Mono', monospace;font-size:12.83px;line-height:19px;color:#6e7681;white-space:pre;">25</div>
<div style="position:absolute;left:68px;top:43px;font-family:'Liberation Mono', monospace;font-size:12.83px;line-height:19px;white-space:pre;"><span style="color:#cccccc">  </span><span style="color:#569cd6">let</span><span style="color:#cccccc"> </span><span style="color:#9cdcfe">text</span><span style="color:#cccccc"> = </span><span style="color:#ce9178">&#x27;&#x27;</span><span style="color:#cccccc">;</span></div>
<div style="position:absolute;left:0px;top:62px;width:42px;text-align:right;font-family:'Liberation Mono', monospace;font-size:12.83px;line-height:19px;color:#6e7681;white-space:pre;">26</div>
<div style="position:absolute;left:68px;top:62px;font-family:'Liberation Mono', monospace;font-size:12.83px;line-height:19px;white-space:pre;"><span style="color:#6a9955">  // Case 1: When App was added to the ROOM</span></div>
<div style="position:absolute;left:0px;top:81px;width:42px;text-align:right;font-family:'Liberation Mono', monospace;font-size:12.83px;line-height:19px;color:#6e7681;white-space:pre;">27</div>
<div style="position:absolute;left:68px;top:81px;font-family:'Liberation Mono', monospace;font-size:12.83px;line-height:19px;white-space:pre;"><span style="color:#cccccc">  </span><span style="color:#c586c0">if</span><span style="color:#cccccc"> </span><span style="color:#179fff">(</span><span style="color:#9cdcfe">req</span><span style="color:#cccccc">.</span><span style="color:#9cdcfe">body</span><span style="color:#cccccc">.</span><span style="color:#9cdcfe">type</span><span style="color:#cccccc"> === </span><span style="color:#ce9178">&#x27;ADDED_TO_SPACE&#x27;</span><span style="color:#cccccc"> &amp;&amp; </span><span style="color:#9cdcfe">req</span><span style="color:#cccccc">.</span><span style="color:#9cdcfe">body</span><span style="color:#cccccc">.</span><span style="color:#9cdcfe">space</span><span style="color:#cccccc">.</span><span style="color:#9cdcfe">type</span><span style="color:#cccccc"> === </span><span style="color:#ce9178">&#x27;ROOM&#x27;</span><span style="color:#179fff">)</span><span style="color:#cccccc"> </span><span style="color:#179fff">{</span></div>
<div style="position:absolute;left:0px;top:100px;width:42px;text-align:right;font-family:'Liberation Mono', monospace;font-size:12.83px;line-height:19px;color:#6e7681;white-space:pre;">28</div>
<div style="position:absolute;left:68px;top:100px;font-family:'Liberation Mono', monospace;font-size:12.83px;line-height:19px;white-space:pre;"><span style="color:#cccccc">    </span><span style="color:#9cdcfe">text</span><span style="color:#cccccc"> = </span><span style="color:#ce9178">`Thanks for adding me to </span><span style="color:#ffd700">${</span><span style="color:#9cdcfe">req</span><span style="color:#cccccc">.</span><span style="color:#9cdcfe">body</span><span style="color:#cccccc">.</span><span style="color:#9cdcfe">space</span><span style="color:#cccccc">.</span><span style="color:#9cdcfe">displayName</span><span style="color:#ffd700">}</span><span style="color:#ce9178">`</span><span style="color:#cccccc">;</span></div>
<div style="position:absolute;left:0px;top:119px;width:42px;text-align:right;font-family:'Liberation Mono', monospace;font-size:12.83px;line-height:19px;color:#6e7681;white-space:pre;">29</div>
<div style="position:absolute;left:68px;top:119px;font-family:'Liberation Mono', monospace;font-size:12.83px;line-height:19px;white-space:pre;"><span style="color:#6a9955">    // Case 2: When App was added to a DM</span></div>
<div style="position:absolute;left:0px;top:138px;width:42px;text-align:right;font-family:'Liberation Mono', monospace;font-size:12.83px;line-height:19px;color:#6e7681;white-space:pre;">30</div>
<div style="position:absolute;left:68px;top:138px;font-family:'Liberation Mono', monospace;font-size:12.83px;line-height:19px;white-space:pre;"><span style="color:#cccccc">  </span><span style="color:#179fff">}</span><span style="color:#cccccc"> </span><span style="color:#c586c0">else</span><span style="color:#cccccc"> </span><span style="color:#c586c0">if</span><span style="color:#cccccc"> </span><span style="color:#179fff">(</span><span style="color:#9cdcfe">req</span><span style="color:#cccccc">.</span><span style="color:#9cdcfe">body</span><span style="color:#cccccc">.</span><span style="color:#9cdcfe">type</span><span style="color:#cccccc"> === </span><span style="color:#ce9178">&#x27;ADDED_TO_SPACE&#x27;</span><span style="color:#cccccc"> &amp;&amp;</span></div>
<div style="position:absolute;left:0px;top:157px;width:42px;text-align:right;font-family:'Liberation Mono', monospace;font-size:12.83px;line-height:19px;color:#6e7681;white-space:pre;">31</div>
<div style="position:absolute;left:68px;top:157px;font-family:'Liberation Mono', monospace;font-size:12.83px;line-height:19px;white-space:pre;"><span style="color:#cccccc">    </span><span style="color:#9cdcfe">req</span><span style="color:#cccccc">.</span><span style="color:#9cdcfe">body</span><span style="color:#cccccc">.</span><span style="color:#9cdcfe">space</span><span style="color:#cccccc">.</span><span style="color:#9cdcfe">type</span><span style="color:#cccccc"> === </span><span style="color:#ce9178">&#x27;DM&#x27;</span><span style="color:#179fff">)</span><span style="color:#cccccc"> </span><span style="color:#179fff">{</span></div>
<div style="position:absolute;left:0px;top:176px;width:42px;text-align:right;font-family:'Liberation Mono', monospace;font-size:12.83px;line-height:19px;color:#6e7681;white-space:pre;">32</div>
<div style="position:absolute;left:68px;top:176px;font-family:'Liberation Mono', monospace;font-size:12.83px;line-height:19px;white-space:pre;"><span style="color:#cccccc">    </span><span style="color:#9cdcfe">text</span><span style="color:#cccccc"> = </span><span style="color:#ce9178">`Thanks for adding me to a DM, </span><span style="color:#ffd700">${</span><span style="color:#9cdcfe">req</span><span style="color:#cccccc">.</span><span style="color:#9cdcfe">body</span><span style="color:#cccccc">.</span><span style="color:#9cdcfe">user</span><span style="color:#cccccc">.</span><span style="color:#9cdcfe">displayName</span><span style="color:#ffd700">}</span><span style="color:#ce9178">`</span><span style="color:#cccccc">;</span></div>
<div style="position:absolute;left:0px;top:195px;width:42px;text-align:right;font-family:'Liberation Mono', monospace;font-size:12.83px;line-height:19px;color:#6e7681;white-space:pre;">33</div>
<div style="position:absolute;left:68px;top:195px;font-family:'Liberation Mono', monospace;font-size:12.83px;line-height:19px;white-space:pre;"><span style="color:#6a9955">    // Case 3: Texting the App</span></div>
<div style="position:absolute;left:0px;top:214px;width:42px;text-align:right;font-family:'Liberation Mono', monospace;font-size:12.83px;line-height:19px;color:#6e7681;white-space:pre;">34</div>
<div style="position:absolute;left:68px;top:214px;font-family:'Liberation Mono', monospace;font-size:12.83px;line-height:19px;white-space:pre;"><span style="color:#cccccc">  </span><span style="color:#179fff">}</span><span style="color:#cccccc"> </span><span style="color:#c586c0">else</span><span style="color:#cccccc"> </span><span style="color:#c586c0">if</span><span style="color:#cccccc"> </span><span style="color:#179fff">(</span><span style="color:#9cdcfe">req</span><span style="color:#cccccc">.</span><span style="color:#9cdcfe">body</span><span style="color:#cccccc">.</span><span style="color:#9cdcfe">type</span><span style="color:#cccccc"> === </span><span style="color:#ce9178">&#x27;MESSAGE&#x27;</span><span style="color:#179fff">)</span><span style="color:#cccccc"> </span><span style="color:#179fff">{</span></div>
<div style="position:absolute;left:0px;top:233px;width:42px;text-align:right;font-family:'Liberation Mono', monospace;font-size:12.83px;line-height:19px;color:#6e7681;white-space:pre;">35</div>
<div style="position:absolute;left:68px;top:233px;font-family:'Liberation Mono', monospace;font-size:12.83px;line-height:19px;white-space:pre;"><span style="color:#cccccc">    </span><span style="color:#9cdcfe">text</span><span style="color:#cccccc"> = </span><span style="color:#ce9178">`Here was your message : </span><span style="color:#ffd700">${</span><span style="color:#9cdcfe">req</span><span style="color:#cccccc">.</span><span style="color:#9cdcfe">body</span><span style="color:#cccccc">.</span><span style="color:#9cdcfe">message</span><span style="color:#cccccc">.</span><span style="color:#9cdcfe">text</span><span style="color:#ffd700">}</span><span style="color:#ce9178">`</span><span style="color:#cccccc">;</span></div>
<div style="position:absolute;left:0px;top:252px;width:42px;text-align:right;font-family:'Liberation Mono', monospace;font-size:12.83px;line-height:19px;color:#6e7681;white-space:pre;">36</div>
<div style="position:absolute;left:68px;top:252px;font-family:'Liberation Mono', monospace;font-size:12.83px;line-height:19px;white-space:pre;"><span style="color:#cccccc">  </span><span style="color:#179fff">}</span></div>
<div style="position:absolute;left:0px;top:271px;width:42px;text-align:right;font-family:'Liberation Mono', monospace;font-size:12.83px;line-height:19px;color:#6e7681;white-space:pre;">37</div>
<div style="position:absolute;left:68px;top:271px;font-family:'Liberation Mono', monospace;font-size:12.83px;line-height:19px;white-space:pre;"><span style="color:#cccccc">  </span><span style="color:#c586c0">return</span><span style="color:#cccccc"> </span><span style="color:#9cdcfe">res</span><span style="color:#cccccc">.</span><span style="color:#dcdcaa">json</span><span style="color:#179fff">(</span><span style="color:#ffd700">{</span><span style="color:#9cdcfe">text</span><span style="color:#ffd700">}</span><span style="color:#179fff">)</span><span style="color:#cccccc">;</span></div>
<div style="position:absolute;left:0px;top:290px;width:42px;text-align:right;font-family:'Liberation Mono', monospace;font-size:12.83px;line-height:19px;color:#6e7681;white-space:pre;">38</div>
<div style="position:absolute;left:68px;top:290px;font-family:'Liberation Mono', monospace;font-size:12.83px;line-height:19px;white-space:pre;"><span style="color:#da70d6">}</span><span style="color:#ffd700">)</span><span style="color:#cccccc">;</span></div>
<div style="position:absolute;left:0px;top:309px;width:42px;text-align:right;font-family:'Liberation Mono', monospace;font-size:12.83px;line-height:19px;color:#6e7681;white-space:pre;">39</div>
<div style="position:absolute;left:0px;top:328px;width:42px;text-align:right;font-family:'Liberation Mono', monospace;font-size:12.83px;line-height:19px;color:#6e7681;white-space:pre;">40</div>
<div style="position:absolute;left:68px;top:328px;font-family:'Liberation Mono', monospace;font-size:12.83px;line-height:19px;white-space:pre;"><span style="color:#9cdcfe">app</span><span style="color:#cccccc">.</span><span style="color:#dcdcaa">listen</span><span style="color:#ffd700">(</span><span style="color:#4fc1ff">PORT</span><span style="color:#cccccc">, </span><span style="color:#da70d6">()</span><span style="color:#cccccc"> </span><span style="color:#569cd6">=&gt;</span><span style="color:#cccccc"> </span><span style="color:#da70d6">{</span></div>
<div style="position:absolute;left:0px;top:347px;width:42px;text-align:right;font-family:'Liberation Mono', monospace;font-size:12.83px;line-height:19px;color:#6e7681;white-space:pre;">41</div>
<div style="position:absolute;left:68px;top:347px;font-family:'Liberation Mono', monospace;font-size:12.83px;line-height:19px;white-space:pre;"><span style="color:#cccccc">  </span><span style="color:#9cdcfe">console</span><span style="color:#cccccc">.</span><span style="color:#dcdcaa">log</span><span style="color:#179fff">(</span><span style="color:#ce9178">`Server is running in port - </span><span style="color:#ffd700">${</span><span style="color:#4fc1ff">PORT</span><span style="color:#ffd700">}</span><span style="color:#ce9178">`</span><span style="color:#179fff">)</span><span style="color:#cccccc">;</span></div>
<div style="position:absolute;left:0px;top:366px;width:42px;text-align:right;font-family:'Liberation Mono', monospace;font-size:12.83px;line-height:19px;color:#6e7681;white-space:pre;">42</div>
<div style="position:absolute;left:68px;top:366px;font-family:'Liberation Mono', monospace;font-size:12.83px;line-height:19px;white-space:pre;"><span style="color:#da70d6">}</span><span style="color:#ffd700">)</span><span style="color:#cccccc">;</span></div>
<div style="position:absolute;left:0px;top:385px;width:42px;text-align:right;font-family:'Liberation Mono', monospace;font-size:12.83px;line-height:19px;color:#cccccc;white-space:pre;">43</div>
<div style="position:absolute;left:5px;top:47px;width:9px;height:9px;border-radius:50%;background:#e51400;"></div>
<div style="position:absolute;left:47px;top:232.5px;width:3px;height:19px;background:repeating-linear-gradient(-45deg,#2588ee 0px,#2588ee 1.4px,transparent 1.4px,transparent 2.12px);"></div>
</div>
<div style="position:absolute;left:365px;top:92px;width:713px;height:3px;background:linear-gradient(#000000 0%, rgba(0,0,0,0.35) 35%, rgba(0,0,0,0) 100%);"></div>
<div style="position:absolute;left:1170px;top:92px;width:13px;height:1px;background:#0e0e0e;"></div>
<svg style="position:absolute;left:1086px;top:93px;" width="84" height="90" viewBox="0 0 84 90"><g opacity="0.42"><rect x="0" y="0.3" width="2" height="1.4" fill="#6a9955"/><rect x="1" y="2.3" width="1" height="1.4" fill="#6a9955"/><rect x="3" y="2.3" width="9" height="1.4" fill="#6a9955"/><rect x="13" y="2.3" width="4" height="1.4" fill="#6a9955"/><rect x="18" y="2.3" width="6" height="1.4" fill="#6a9955"/><rect x="25" y="2.3" width="4" height="1.4" fill="#6a9955"/><rect x="1" y="4.3" width="1" height="1.4" fill="#6a9955"/><rect x="1" y="6.3" width="1" height="1.4" fill="#6a9955"/><rect x="3" y="6.3" width="8" height="1.4" fill="#6a9955"/><rect x="12" y="6.3" width="5" height="1.4" fill="#6a9955"/><rect x="18" y="6.3" width="3" height="1.4" fill="#6a9955"/><rect x="22" y="6.3" width="6" height="1.4" fill="#6a9955"/><rect x="29" y="6.3" width="8" height="1.4" fill="#6a9955"/><rect x="38" y="6.3" width="7" height="1.4" fill="#6a9955"/><rect x="46" y="6.3" width="3" height="1.4" fill="#6a9955"/><rect x="50" y="6.3" width="4" height="1.4" fill="#6a9955"/><rect x="55" y="6.3" width="11" height="1.4" fill="#6a9955"/><rect x="1" y="8.3" width="1" height="1.4" fill="#6a9955"/><rect x="3" y="8.3" width="3" height="1.4" fill="#6a9955"/><rect x="7" y="8.3" width="3" height="1.4" fill="#6a9955"/><rect x="11" y="8.3" width="3" height="1.4" fill="#6a9955"/><rect x="15" y="8.3" width="3" height="1.4" fill="#6a9955"/><rect x="19" y="8.3" width="4" height="1.4" fill="#6a9955"/><rect x="24" y="8.3" width="4" height="1.4" fill="#6a9955"/><rect x="29" y="8.3" width="6" height="1.4" fill="#6a9955"/><rect x="36" y="8.3" width="2" height="1.4" fill="#6a9955"/><rect x="39" y="8.3" width="10" height="1.4" fill="#6a9955"/><rect x="50" y="8.3" width="4" height="1.4" fill="#6a9955"/><rect x="55" y="8.3" width="3" height="1.4" fill="#6a9955"/><rect x="59" y="8.3" width="8" height="1.4" fill="#6a9955"/><rect x="1" y="10.3" width="1" height="1.4" fill="#6a9955"/><rect x="3" y="10.3" width="3" height="1.4" fill="#6a9955"/><rect x="7" y="10.3" width="3" height="1.4" fill="#6a9955"/><rect x="11" y="10.3" width="6" height="1.4" fill="#6a9955"/><rect x="18" y="10.3" width="1" height="1.4" fill="#6a9955"/><rect x="20" y="10.3" width="4" height="1.4" fill="#6a9955"/><rect x="25" y="10.3" width="2" height="1.4" fill="#6a9955"/><rect x="28" y="10.3" width="3" height="1.4" fill="#6a9955"/><rect x="32" y="10.3" width="7" height="1.4" fill="#6a9955"/><rect x="40" y="10.3" width="2" height="1.4" fill="#6a9955"/><rect x="1" y="12.3" width="1" height="1.4" fill="#6a9955"/><rect x="1" y="14.3" width="1" height="1.4" fill="#6a9955"/><rect x="3" y="14.3" width="43" height="1.4" fill="#6a9955"/><rect x="1" y="16.3" width="1" height="1.4" fill="#6a9955"/><rect x="1" y="18.3" width="1" height="1.4" fill="#6a9955"/><rect x="3" y="18.3" width="6" height="1.4" fill="#6a9955"/><rect x="10" y="18.3" width="8" height="1.4" fill="#6a9955"/><rect x="19" y="18.3" width="2" height="1.4" fill="#6a9955"/><rect x="22" y="18.3" width="10" height="1.4" fill="#6a9955"/><rect x="33" y="18.3" width="3" height="1.4" fill="#6a9955"/><rect x="37" y="18.3" width="2" height="1.4" fill="#6a9955"/><rect x="40" y="18.3" width="6" height="1.4" fill="#6a9955"/><rect x="47" y="18.3" width="2" height="1.4" fill="#6a9955"/><rect x="50" y="18.3" width="2" height="1.4" fill="#6a9955"/><rect x="53" y="18.3" width="8" height="1.4" fill="#6a9955"/><rect x="62" y="18.3" width="8" height="1.4" fill="#6a9955"/><rect x="1" y="20.3" width="1" height="1.4" fill="#6a9955"/><rect x="3" y="20.3" width="11" height="1.4" fill="#6a9955"/><rect x="15" y="20.3" width="5" height="1.4" fill="#6a9955"/><rect x="21" y="20.3" width="3" height="1.4" fill="#6a9955"/><rect x="25" y="20.3" width="7" height="1.4" fill="#6a9955"/><rect x="33" y="20.3" width="2" height="1.4" fill="#6a9955"/><rect x="36" y="20.3" width="11" height="1.4" fill="#6a9955"/><rect x="48" y="20.3" width="2" height="1.4" fill="#6a9955"/><rect x="51" y="20.3" width="2" height="1.4" fill="#6a9955"/><rect x="54" y="20.3" width="3" height="1.4" fill="#6a9955"/><rect x="58" y="20.3" width="3" height="1.4" fill="#6a9955"/><rect x="62" y="20.3" width="6" height="1.4" fill="#6a9955"/><rect x="1" y="22.3" width="1" height="1.4" fill="#6a9955"/><rect x="3" y="22.3" width="7" height="1.4" fill="#6a9955"/><rect x="11" y="22.3" width="10" height="1.4" fill="#6a9955"/><rect x="22" y="22.3" width="2" height="1.4" fill="#6a9955"/><rect x="25" y="22.3" width="10" height="1.4" fill="#6a9955"/><rect x="36" y="22.3" width="2" height="1.4" fill="#6a9955"/><rect x="39" y="22.3" width="3" height="1.4" fill="#6a9955"/><rect x="43" y="22.3" width="5" height="1.4" fill="#6a9955"/><rect x="49" y="22.3" width="6" height="1.4" fill="#6a9955"/><rect x="56" y="22.3" width="7" height="1.4" fill="#6a9955"/><rect x="64" y="22.3" width="2" height="1.4" fill="#6a9955"/><rect x="67" y="22.3" width="8" height="1.4" fill="#6a9955"/><rect x="1" y="24.3" width="1" height="1.4" fill="#6a9955"/><rect x="3" y="24.3" width="3" height="1.4" fill="#6a9955"/><rect x="7" y="24.3" width="3" height="1.4" fill="#6a9955"/><rect x="11" y="24.3" width="7" height="1.4" fill="#6a9955"/><rect x="19" y="24.3" width="3" height="1.4" fill="#6a9955"/><rect x="23" y="24.3" width="3" height="1.4" fill="#6a9955"/><rect x="27" y="24.3" width="8" height="1.4" fill="#6a9955"/><rect x="36" y="24.3" width="8" height="1.4" fill="#6a9955"/><rect x="45" y="24.3" width="9" height="1.4" fill="#6a9955"/><rect x="55" y="24.3" width="11" height="1.4" fill="#6a9955"/><rect x="67" y="24.3" width="3" height="1.4" fill="#6a9955"/><rect x="1" y="26.3" width="1" height="1.4" fill="#6a9955"/><rect x="3" y="26.3" width="11" height="1.4" fill="#6a9955"/><rect x="15" y="26.3" width="5" height="1.4" fill="#6a9955"/><rect x="21" y="26.3" width="3" height="1.4" fill="#6a9955"/><rect x="25" y="26.3" width="8" height="1.4" fill="#6a9955"/><rect x="1" y="28.3" width="2" height="1.4" fill="#6a9955"/><rect x="0" y="32.3" width="5" height="1.4" fill="#569cd6"/><rect x="6" y="32.3" width="7" height="1.4" fill="#9cdcfe"/><rect x="14" y="32.3" width="1" height="1.4" fill="#cccccc"/><rect x="16" y="32.3" width="7" height="1.4" fill="#dcdcaa"/><rect x="23" y="32.3" width="1" height="1.4" fill="#ffd700"/><rect x="24" y="32.3" width="9" height="1.4" fill="#ce9178"/><rect x="33" y="32.3" width="1" height="1.4" fill="#ffd700"/><rect x="34" y="32.3" width="1" height="1.4" fill="#cccccc"/><rect x="0" y="34.3" width="5" height="1.4" fill="#569cd6"/><rect x="6" y="34.3" width="4" height="1.4" fill="#4fc1ff"/><rect x="11" y="34.3" width="1" height="1.4" fill="#cccccc"/><rect x="13" y="34.3" width="7" height="1.4" fill="#9cdcfe"/><rect x="20" y="34.3" width="1" height="1.4" fill="#cccccc"/><rect x="21" y="34.3" width="3" height="1.4" fill="#9cdcfe"/><rect x="24" y="34.3" width="1" height="1.4" fill="#cccccc"/><rect x="25" y="34.3" width="4" height="1.4" fill="#4fc1ff"/><rect x="30" y="34.3" width="2" height="1.4" fill="#cccccc"/><rect x="33" y="34.3" width="4" height="1.4" fill="#b5cea8"/><rect x="37" y="34.3" width="1" height="1.4" fill="#cccccc"/><rect x="0" y="38.3" width="5" height="1.4" fill="#569cd6"/><rect x="6" y="38.3" width="3" height="1.4" fill="#9cdcfe"/><rect x="10" y="38.3" width="1" height="1.4" fill="#cccccc"/><rect x="12" y="38.3" width="7" height="1.4" fill="#dcdcaa"/><rect x="19" y="38.3" width="2" height="1.4" fill="#ffd700"/><rect x="2" y="40.3" width="1" height="1.4" fill="#cccccc"/><rect x="3" y="40.3" width="3" height="1.4" fill="#dcdcaa"/><rect x="6" y="40.3" width="1" height="1.4" fill="#ffd700"/><rect x="7" y="40.3" width="7" height="1.4" fill="#9cdcfe"/><rect x="14" y="40.3" width="1" height="1.4" fill="#cccccc"/><rect x="15" y="40.3" width="10" height="1.4" fill="#dcdcaa"/><rect x="25" y="40.3" width="2" height="1.4" fill="#da70d6"/><rect x="27" y="40.3" width="8" height="1.4" fill="#9cdcfe"/><rect x="35" y="40.3" width="1" height="1.4" fill="#cccccc"/><rect x="37" y="40.3" width="5" height="1.4" fill="#569cd6"/><rect x="42" y="40.3" width="2" height="1.4" fill="#da70d6"/><rect x="44" y="40.3" width="1" height="1.4" fill="#ffd700"/><rect x="2" y="42.3" width="1" height="1.4" fill="#cccccc"/><rect x="3" y="42.3" width="3" height="1.4" fill="#dcdcaa"/><rect x="6" y="42.3" width="1" height="1.4" fill="#ffd700"/><rect x="7" y="42.3" width="7" height="1.4" fill="#9cdcfe"/><rect x="14" y="42.3" width="1" height="1.4" fill="#cccccc"/><rect x="15" y="42.3" width="4" height="1.4" fill="#dcdcaa"/><rect x="19" y="42.3" width="2" height="1.4" fill="#da70d6"/><rect x="21" y="42.3" width="1" height="1.4" fill="#ffd700"/><rect x="22" y="42.3" width="1" height="1.4" fill="#cccccc"/><rect x="0" y="46.3" width="3" height="1.4" fill="#9cdcfe"/><rect x="3" y="46.3" width="1" height="1.4" fill="#cccccc"/><rect x="4" y="46.3" width="4" height="1.4" fill="#dcdcaa"/><rect x="8" y="46.3" width="1" height="1.4" fill="#ffd700"/><rect x="9" y="46.3" width="3" height="1.4" fill="#ce9178"/><rect x="12" y="46.3" width="1" height="1.4" fill="#cccccc"/><rect x="14" y="46.3" width="1" height="1.4" fill="#da70d6"/><rect x="15" y="46.3" width="3" height="1.4" fill="#9cdcfe"/><rect x="18" y="46.3" width="1" height="1.4" fill="#cccccc"/><rect x="20" y="46.3" width="3" height="1.4" fill="#9cdcfe"/><rect x="23" y="46.3" width="1" height="1.4" fill="#da70d6"/><rect x="25" y="46.3" width="2" height="1.4" fill="#569cd6"/><rect x="28" y="46.3" width="1" height="1.4" fill="#da70d6"/><rect x="2" y="48.3" width="3" height="1.4" fill="#569cd6"/><rect x="6" y="48.3" width="4" height="1.4" fill="#9cdcfe"/><rect x="11" y="48.3" width="1" height="1.4" fill="#cccccc"/><rect x="13" y="48.3" width="2" height="1.4" fill="#ce9178"/><rect x="15" y="48.3" width="1" height="1.4" fill="#cccccc"/><rect x="2" y="50.3" width="2" height="1.4" fill="#6a9955"/><rect x="5" y="50.3" width="4" height="1.4" fill="#6a9955"/><rect x="10" y="50.3" width="2" height="1.4" fill="#6a9955"/><rect x="13" y="50.3" width="4" height="1.4" fill="#6a9955"/><rect x="18" y="50.3" width="3" height="1.4" fill="#6a9955"/><rect x="22" y="50.3" width="3" height="1.4" fill="#6a9955"/><rect x="26" y="50.3" width="5" height="1.4" fill="#6a9955"/><rect x="32" y="50.3" width="2" height="1.4" fill="#6a9955"/><rect x="35" y="50.3" width="3" height="1.4" fill="#6a9955"/><rect x="39" y="50.3" width="4" height="1.4" fill="#6a9955"/><rect x="2" y="52.3" width="2" height="1.4" fill="#c586c0"/><rect x="5" y="52.3" width="1" height="1.4" fill="#179fff"/><rect x="6" y="52.3" width="3" height="1.4" fill="#9cdcfe"/><rect x="9" y="52.3" width="1" height="1.4" fill="#cccccc"/><rect x="10" y="52.3" width="4" height="1.4" fill="#9cdcfe"/><rect x="14" y="52.3" width="1" height="1.4" fill="#cccccc"/><rect x="15" y="52.3" width="4" height="1.4" fill="#9cdcfe"/><rect x="20" y="52.3" width="3" height="1.4" fill="#cccccc"/><rect x="24" y="52.3" width="16" height="1.4" fill="#ce9178"/><rect x="41" y="52.3" width="2" height="1.4" fill="#cccccc"/><rect x="44" y="52.3" width="3" height="1.4" fill="#9cdcfe"/><rect x="47" y="52.3" width="1" height="1.4" fill="#cccccc"/><rect x="48" y="52.3" width="4" height="1.4" fill="#9cdcfe"/><rect x="52" y="52.3" width="1" height="1.4" fill="#cccccc"/><rect x="53" y="52.3" width="5" height="1.4" fill="#9cdcfe"/><rect x="58" y="52.3" width="1" height="1.4" fill="#cccccc"/><rect x="59" y="52.3" width="4" height="1.4" fill="#9cdcfe"/><rect x="64" y="52.3" width="3" height="1.4" fill="#cccccc"/><rect x="68" y="52.3" width="6" height="1.4" fill="#ce9178"/><rect x="74" y="52.3" width="1" height="1.4" fill="#179fff"/><rect x="76" y="52.3" width="1" height="1.4" fill="#179fff"/><rect x="4" y="54.3" width="4" height="1.4" fill="#9cdcfe"/><rect x="9" y="54.3" width="1" height="1.4" fill="#cccccc"/><rect x="11" y="54.3" width="7" height="1.4" fill="#ce9178"/><rect x="19" y="54.3" width="3" height="1.4" fill="#ce9178"/><rect x="23" y="54.3" width="6" height="1.4" fill="#ce9178"/><rect x="30" y="54.3" width="2" height="1.4" fill="#ce9178"/><rect x="33" y="54.3" width="2" height="1.4" fill="#ce9178"/><rect x="36" y="54.3" width="2" height="1.4" fill="#ffd700"/><rect x="38" y="54.3" width="3" height="1.4" fill="#9cdcfe"/><rect x="41" y="54.3" width="1" height="1.4" fill="#cccccc"/><rect x="42" y="54.3" width="4" height="1.4" fill="#9cdcfe"/><rect x="46" y="54.3" width="1" height="1.4" fill="#cccccc"/><rect x="47" y="54.3" width="5" height="1.4" fill="#9cdcfe"/><rect x="52" y="54.3" width="1" height="1.4" fill="#cccccc"/><rect x="53" y="54.3" width="11" height="1.4" fill="#9cdcfe"/><rect x="64" y="54.3" width="1" height="1.4" fill="#ffd700"/><rect x="65" y="54.3" width="1" height="1.4" fill="#ce9178"/><rect x="66" y="54.3" width="1" height="1.4" fill="#cccccc"/><rect x="4" y="56.3" width="2" height="1.4" fill="#6a9955"/><rect x="7" y="56.3" width="4" height="1.4" fill="#6a9955"/><rect x="12" y="56.3" width="2" height="1.4" fill="#6a9955"/><rect x="15" y="56.3" width="4" height="1.4" fill="#6a9955"/><rect x="20" y="56.3" width="3" height="1.4" fill="#6a9955"/><rect x="24" y="56.3" width="3" height="1.4" fill="#6a9955"/><rect x="28" y="56.3" width="5" height="1.4" fill="#6a9955"/><rect x="34" y="56.3" width="2" height="1.4" fill="#6a9955"/><rect x="37" y="56.3" width="1" height="1.4" fill="#6a9955"/><rect x="39" y="56.3" width="2" height="1.4" fill="#6a9955"/><rect x="2" y="58.3" width="1" height="1.4" fill="#179fff"/><rect x="4" y="58.3" width="4" height="1.4" fill="#c586c0"/><rect x="9" y="58.3" width="2" height="1.4" fill="#c586c0"/><rect x="12" y="58.3" width="1" height="1.4" fill="#179fff"/><rect x="13" y="58.3" width="3" height="1.4" fill="#9cdcfe"/><rect x="16" y="58.3" width="1" height="1.4" fill="#cccccc"/><rect x="17" y="58.3" width="4" height="1.4" fill="#9cdcfe"/><rect x="21" y="58.3" width="1" height="1.4" fill="#cccccc"/><rect x="22" y="58.3" width="4" height="1.4" fill="#9cdcfe"/><rect x="27" y="58.3" width="3" height="1.4" fill="#cccccc"/><rect x="31" y="58.3" width="16" height="1.4" fill="#ce9178"/><rect x="48" y="58.3" width="2" height="1.4" fill="#cccccc"/><rect x="4" y="60.3" width="3" height="1.4" fill="#9cdcfe"/><rect x="7" y="60.3" width="1" height="1.4" fill="#cccccc"/><rect x="8" y="60.3" width="4" height="1.4" fill="#9cdcfe"/><rect x="12" y="60.3" width="1" height="1.4" fill="#cccccc"/><rect x="13" y="60.3" width="5" height="1.4" fill="#9cdcfe"/><rect x="18" y="60.3" width="1" height="1.4" fill="#cccccc"/><rect x="19" y="60.3" width="4" height="1.4" fill="#9cdcfe"/><rect x="24" y="60.3" width="3" height="1.4" fill="#cccccc"/><rect x="28" y="60.3" width="4" height="1.4" fill="#ce9178"/><rect x="32" y="60.3" width="1" height="1.4" fill="#179fff"/><rect x="34" y="60.3" width="1" height="1.4" fill="#179fff"/><rect x="4" y="62.3" width="4" height="1.4" fill="#9cdcfe"/><rect x="9" y="62.3" width="1" height="1.4" fill="#cccccc"/><rect x="11" y="62.3" width="7" height="1.4" fill="#ce9178"/><rect x="19" y="62.3" width="3" height="1.4" fill="#ce9178"/><rect x="23" y="62.3" width="6" height="1.4" fill="#ce9178"/><rect x="30" y="62.3" width="2" height="1.4" fill="#ce9178"/><rect x="33" y="62.3" width="2" height="1.4" fill="#ce9178"/><rect x="36" y="62.3" width="1" height="1.4" fill="#ce9178"/><rect x="38" y="62.3" width="3" height="1.4" fill="#ce9178"/><rect x="42" y="62.3" width="2" height="1.4" fill="#ffd700"/><rect x="44" y="62.3" width="3" height="1.4" fill="#9cdcfe"/><rect x="47" y="62.3" width="1" height="1.4" fill="#cccccc"/><rect x="48" y="62.3" width="4" height="1.4" fill="#9cdcfe"/><rect x="52" y="62.3" width="1" height="1.4" fill="#cccccc"/><rect x="53" y="62.3" width="4" height="1.4" fill="#9cdcfe"/><rect x="57" y="62.3" width="1" height="1.4" fill="#cccccc"/><rect x="58" y="62.3" width="11" height="1.4" fill="#9cdcfe"/><rect x="69" y="62.3" width="1" height="1.4" fill="#ffd700"/><rect x="70" y="62.3" width="1" height="1.4" fill="#ce9178"/><rect x="71" y="62.3" width="1" height="1.4" fill="#cccccc"/><rect x="4" y="64.3" width="2" height="1.4" fill="#6a9955"/><rect x="7" y="64.3" width="4" height="1.4" fill="#6a9955"/><rect x="12" y="64.3" width="2" height="1.4" fill="#6a9955"/><rect x="15" y="64.3" width="7" height="1.4" fill="#6a9955"/><rect x="23" y="64.3" width="3" height="1.4" fill="#6a9955"/><rect x="27" y="64.3" width="3" height="1.4" fill="#6a9955"/><rect x="2" y="66.3" width="1" height="1.4" fill="#179fff"/><rect x="4" y="66.3" width="4" height="1.4" fill="#c586c0"/><rect x="9" y="66.3" width="2" height="1.4" fill="#c586c0"/><rect x="12" y="66.3" width="1" height="1.4" fill="#179fff"/><rect x="13" y="66.3" width="3" height="1.4" fill="#9cdcfe"/><rect x="16" y="66.3" width="1" height="1.4" fill="#cccccc"/><rect x="17" y="66.3" width="4" height="1.4" fill="#9cdcfe"/><rect x="21" y="66.3" width="1" height="1.4" fill="#cccccc"/><rect x="22" y="66.3" width="4" height="1.4" fill="#9cdcfe"/><rect x="27" y="66.3" width="3" height="1.4" fill="#cccccc"/><rect x="31" y="66.3" width="9" height="1.4" fill="#ce9178"/><rect x="40" y="66.3" width="1" height="1.4" fill="#179fff"/><rect x="42" y="66.3" width="1" height="1.4" fill="#179fff"/><rect x="4" y="68.3" width="4" height="1.4" fill="#9cdcfe"/><rect x="9" y="68.3" width="1" height="1.4" fill="#cccccc"/><rect x="11" y="68.3" width="5" height="1.4" fill="#ce9178"/><rect x="17" y="68.3" width="3" height="1.4" fill="#ce9178"/><rect x="21" y="68.3" width="4" height="1.4" fill="#ce9178"/><rect x="26" y="68.3" width="7" height="1.4" fill="#ce9178"/><rect x="34" y="68.3" width="1" height="1.4" fill="#ce9178"/><rect x="36" y="68.3" width="2" height="1.4" fill="#ffd700"/><rect x="38" y="68.3" width="3" height="1.4" fill="#9cdcfe"/><rect x="41" y="68.3" width="1" height="1.4" fill="#cccccc"/><rect x="42" y="68.3" width="4" height="1.4" fill="#9cdcfe"/><rect x="46" y="68.3" width="1" height="1.4" fill="#cccccc"/><rect x="47" y="68.3" width="7" height="1.4" fill="#9cdcfe"/><rect x="54" y="68.3" width="1" height="1.4" fill="#cccccc"/><rect x="55" y="68.3" width="4" height="1.4" fill="#9cdcfe"/><rect x="59" y="68.3" width="1" height="1.4" fill="#ffd700"/><rect x="60" y="68.3" width="1" height="1.4" fill="#ce9178"/><rect x="61" y="68.3" width="1" height="1.4" fill="#cccccc"/><rect x="2" y="70.3" width="1" height="1.4" fill="#179fff"/><rect x="2" y="72.3" width="6" height="1.4" fill="#c586c0"/><rect x="9" y="72.3" width="3" height="1.4" fill="#9cdcfe"/><rect x="12" y="72.3" width="1" height="1.4" fill="#cccccc"/><rect x="13" y="72.3" width="4" height="1.4" fill="#dcdcaa"/><rect x="17" y="72.3" width="1" height="1.4" fill="#179fff"/><rect x="18" y="72.3" width="1" height="1.4" fill="#ffd700"/><rect x="19" y="72.3" width="4" height="1.4" fill="#9cdcfe"/><rect x="23" y="72.3" width="1" height="1.4" fill="#ffd700"/><rect x="24" y="72.3" width="1" height="1.4" fill="#179fff"/><rect x="25" y="72.3" width="1" height="1.4" fill="#cccccc"/><rect x="0" y="74.3" width="1" height="1.4" fill="#da70d6"/><rect x="1" y="74.3" width="1" height="1.4" fill="#ffd700"/><rect x="2" y="74.3" width="1" height="1.4" fill="#cccccc"/><rect x="0" y="78.3" width="3" height="1.4" fill="#9cdcfe"/><rect x="3" y="78.3" width="1" height="1.4" fill="#cccccc"/><rect x="4" y="78.3" width="6" height="1.4" fill="#dcdcaa"/><rect x="10" y="78.3" width="1" height="1.4" fill="#ffd700"/><rect x="11" y="78.3" width="4" height="1.4" fill="#4fc1ff"/><rect x="15" y="78.3" width="1" height="1.4" fill="#cccccc"/><rect x="17" y="78.3" width="2" height="1.4" fill="#da70d6"/><rect x="20" y="78.3" width="2" height="1.4" fill="#569cd6"/><rect x="23" y="78.3" width="1" height="1.4" fill="#da70d6"/><rect x="2" y="80.3" width="7" height="1.4" fill="#9cdcfe"/><rect x="9" y="80.3" width="1" height="1.4" fill="#cccccc"/><rect x="10" y="80.3" width="3" height="1.4" fill="#dcdcaa"/><rect x="13" y="80.3" width="1" height="1.4" fill="#179fff"/><rect x="14" y="80.3" width="7" height="1.4" fill="#ce9178"/><rect x="22" y="80.3" width="2" height="1.4" fill="#ce9178"/><rect x="25" y="80.3" width="7" height="1.4" fill="#ce9178"/><rect x="33" y="80.3" width="2" height="1.4" fill="#ce9178"/><rect x="36" y="80.3" width="4" height="1.4" fill="#ce9178"/><rect x="41" y="80.3" width="1" height="1.4" fill="#ce9178"/><rect x="43" y="80.3" width="2" height="1.4" fill="#ffd700"/><rect x="45" y="80.3" width="4" height="1.4" fill="#4fc1ff"/><rect x="49" y="80.3" width="1" height="1.4" fill="#ffd700"/><rect x="50" y="80.3" width="1" height="1.4" fill="#ce9178"/><rect x="51" y="80.3" width="1" height="1.4" fill="#179fff"/><rect x="52" y="80.3" width="1" height="1.4" fill="#cccccc"/><rect x="0" y="82.3" width="1" height="1.4" fill="#da70d6"/><rect x="1" y="82.3" width="1" height="1.4" fill="#ffd700"/><rect x="2" y="82.3" width="1" height="1.4" fill="#cccccc"/></g></svg>
<div style="position:absolute;left:1080px;top:161px;width:2px;height:2px;background:#2b7bd6;"></div>
<div style="position:absolute;left:1170px;top:92px;width:1px;height:543px;background:#0e0e0e;"></div>
<div style="position:absolute;left:1170px;top:260px;width:13px;height:219px;background:#434343;"></div>
<div style="position:absolute;left:1171px;top:353px;width:4px;height:8px;background:#4776ab;"></div>
<div style="position:absolute;left:1171px;top:414px;width:12px;height:2px;background:#8a8a8a;"></div>
<div id="t31" style="position:absolute;left:385.00px;top:649.5px;white-space:pre;font-family:'Liberation Sans', sans-serif;font-size:10.4px;line-height:10.4px;color:#9d9d9d;font-weight:normal;letter-spacing:-0.621px;">PROBLEMS</div>
<div id="t32" style="position:absolute;left:462.48px;top:649.5px;white-space:pre;font-family:'Liberation Sans', sans-serif;font-size:10.4px;line-height:10.4px;color:#9d9d9d;font-weight:normal;letter-spacing:-0.196px;">OUTPUT</div>
<div id="t33" style="position:absolute;left:528.00px;top:649.5px;white-space:pre;font-family:'Liberation Sans', sans-serif;font-size:10.4px;line-height:10.4px;color:#e7e7e7;font-weight:normal;letter-spacing:-0.500px;">DEBUG CONSOLE</div>
<div id="t34" style="position:absolute;left:637.84px;top:649.5px;white-space:pre;font-family:'Liberation Sans', sans-serif;font-size:10.4px;line-height:10.4px;color:#9d9d9d;font-weight:normal;letter-spacing:-0.191px;">TERMINAL</div>
<div id="t35" style="position:absolute;left:713.00px;top:649.5px;white-space:pre;font-family:'Liberation Sans', sans-serif;font-size:10.4px;line-height:10.4px;color:#9d9d9d;font-weight:normal;letter-spacing:-1.000px;">PORTS</div>
<div style="position:absolute;left:755px;top:645px;width:18px;height:18px;background:#616161;border-radius:9px;"><div style="position:absolute;left:0;top:0;width:18px;text-align:center;font:11px/18px 'Liberation Sans',sans-serif;color:#f8f8f8;">5</div></div>
<div style="position:absolute;left:526px;top:665px;width:89px;height:1px;background:#2b7bd6;"></div>
<div style="position:absolute;left:916px;top:642px;width:178px;height:24px;background:#313131;border-radius:2px;"></div>
<div id="t36" style="position:absolute;left:922.00px;top:648.7px;white-space:pre;font-family:'Liberation Sans', sans-serif;font-size:12.5px;line-height:12.5px;color:#989898;font-weight:normal;letter-spacing:-0.296px;">Filter (e.g. text, !exclude)</div>
<svg style="position:absolute;left:1101px;top:646px;" width="17" height="16" viewBox="0 0 17 16"><path d="M0.5 3.5h15M0.5 6.5h15M0.5 9.5h9M0.5 12.5h9" stroke="#cccccc" stroke-width="1"/><path d="M11 8.8l4.2 4.2M15.2 8.8 11 13" stroke="#cccccc" stroke-width="1.1"/></svg>
<svg style="position:absolute;left:1127px;top:646px;" width="16" height="16" viewBox="0 0 16 16"><path d="M3 8.6 8 4.1l5.2 4.5" fill="none" stroke="#cccccc" stroke-width="1.1"/></svg>
<svg style="position:absolute;left:1153px;top:646px;" width="16" height="16" viewBox="0 0 16 16"><path d="M3.3 2.8l9.2 8.6M12.5 2.8 3.3 11.4" stroke="#cccccc" stroke-width="1.1"/></svg>
<div style="position:absolute;left:365px;top:670px;width:818px;height:320px;overflow:hidden;">
<div style="position:absolute;left:30px;top:-15.80px;font-family:'Liberation Mono', monospace;font-size:12.83px;line-height:19.75px;white-space:pre;color:#e5e510;">[nodemon] 3.0.1</div>
<div style="position:absolute;right:7px;top:-15.10px;font-family:'Liberation Mono', monospace;font-size:12.83px;line-height:19.75px;white-space:pre;color:#cccccc;text-decoration:underline;">log.js:34</div>
<div style="position:absolute;left:30px;top:4.20px;font-family:'Liberation Mono', monospace;font-size:12.83px;line-height:19.75px;white-space:pre;color:#e5e510;">[nodemon] to restart at any time, enter `rs`</div>
<div style="position:absolute;right:7px;top:4.90px;font-family:'Liberation Mono', monospace;font-size:12.83px;line-height:19.75px;white-space:pre;color:#cccccc;text-decoration:underline;">log.js:34</div>
<div style="position:absolute;left:30px;top:24.20px;font-family:'Liberation Mono', monospace;font-size:12.83px;line-height:19.75px;white-space:pre;color:#e5e510;">[nodemon] watching path(s): **/*</div>
<div style="position:absolute;right:7px;top:24.90px;font-family:'Liberation Mono', monospace;font-size:12.83px;line-height:19.75px;white-space:pre;color:#cccccc;text-decoration:underline;">log.js:34</div>
<div style="position:absolute;left:30px;top:44.20px;font-family:'Liberation Mono', monospace;font-size:12.83px;line-height:19.75px;white-space:pre;color:#e5e510;">[nodemon] watching extensions: js,mjs,cjs,json</div>
<div style="position:absolute;right:7px;top:44.90px;font-family:'Liberation Mono', monospace;font-size:12.83px;line-height:19.75px;white-space:pre;color:#cccccc;text-decoration:underline;">log.js:34</div>
<div style="position:absolute;left:30px;top:64.20px;font-family:'Liberation Mono', monospace;font-size:12.83px;line-height:19.75px;white-space:pre;color:#35a866;">[nodemon] starting `npm run debug`</div>
<div style="position:absolute;right:7px;top:64.90px;font-family:'Liberation Mono', monospace;font-size:12.83px;line-height:19.75px;white-space:pre;color:#cccccc;text-decoration:underline;">log.js:34</div>
<div style="position:absolute;right:7px;top:84.90px;font-family:'Liberation Mono', monospace;font-size:12.83px;line-height:19.75px;white-space:pre;color:#cccccc;text-decoration:underline;">run-script-pkg.js:64</div>
<div style="position:absolute;left:30px;top:103.70px;font-family:'Liberation Mono', monospace;font-size:12.83px;line-height:19.75px;white-space:pre;color:#3b8eea;">&gt; basic-app@1.0.0 debug</div>
<div style="position:absolute;left:30px;top:122.70px;font-family:'Liberation Mono', monospace;font-size:12.83px;line-height:19.75px;white-space:pre;color:#3b8eea;">&gt; node --inspect index.js</div>
<div style="position:absolute;left:30px;top:162.20px;font-family:'Liberation Mono', monospace;font-size:12.83px;line-height:19.75px;white-space:pre;color:#3b8eea;">Server is running in port - 9000</div>
<div style="position:absolute;right:7px;top:162.90px;font-family:'Liberation Mono', monospace;font-size:12.83px;line-height:19.75px;white-space:pre;color:#cccccc;text-decoration:underline;">index.js:41</div>
<div style="position:absolute;left:30px;top:182.20px;font-family:'Liberation Mono', monospace;font-size:12.83px;line-height:19.75px;white-space:pre;color:#35a866;">[nodemon] restarting due to changes...</div>
<div style="position:absolute;right:7px;top:182.90px;font-family:'Liberation Mono', monospace;font-size:12.83px;line-height:19.75px;white-space:pre;color:#cccccc;text-decoration:underline;">log.js:34</div>
<div style="position:absolute;left:30px;top:202.20px;font-family:'Liberation Mono', monospace;font-size:12.83px;line-height:19.75px;white-space:pre;color:#35a866;">[nodemon] starting `npm run debug`</div>
<div style="position:absolute;right:7px;top:202.90px;font-family:'Liberation Mono', monospace;font-size:12.83px;line-height:19.75px;white-space:pre;color:#cccccc;text-decoration:underline;">log.js:34</div>
<div style="position:absolute;right:7px;top:222.90px;font-family:'Liberation Mono', monospace;font-size:12.83px;line-height:19.75px;white-space:pre;color:#cccccc;text-decoration:underline;">run-script-pkg.js:64</div>
<div style="position:absolute;left:30px;top:241.70px;font-family:'Liberation Mono', monospace;font-size:12.83px;line-height:19.75px;white-space:pre;color:#3b8eea;">&gt; basic-app@1.0.0 debug</div>
<div style="position:absolute;left:30px;top:260.70px;font-family:'Liberation Mono', monospace;font-size:12.83px;line-height:19.75px;white-space:pre;color:#3b8eea;">&gt; node --inspect index.js</div>
<div style="position:absolute;left:30px;top:300.20px;font-family:'Liberation Mono', monospace;font-size:12.83px;line-height:19.75px;white-space:pre;color:#3b8eea;">Server is running in port - 9000</div>
<div style="position:absolute;right:7px;top:300.90px;font-family:'Liberation Mono', monospace;font-size:12.83px;line-height:19.75px;white-space:pre;color:#cccccc;text-decoration:underline;">index.js:41</div>
</div>
<div style="position:absolute;left:365px;top:669px;width:818px;height:2px;background:linear-gradient(rgba(0,0,0,0.65),rgba(0,0,0,0));"></div>
<div style="position:absolute;left:365px;top:990px;width:818px;height:1px;background:#3c3c3c;"></div>
<svg style="position:absolute;left:376px;top:995px;" width="10" height="12" viewBox="0 0 10 12"><path d="M2 1.5 7 6 2 10.5" fill="none" stroke="#cccccc" stroke-width="1.2"/></svg>
<svg style="position:absolute;left:12px;top:1014px;" width="11" height="14" viewBox="0 0 11 14"><path d="M1 12 5 8M1 4.5 5 8M10 1.5 6.5 5M6.5 5 10 8.5" fill="none" stroke="#ffffff" stroke-width="1.1"/></svg>
<div id="t37" style="position:absolute;left:27.68px;top:1016px;white-space:pre;font-family:'Liberation Sans', sans-serif;font-size:12px;line-height:12px;color:#ffffff;font-weight:normal;letter-spacing:-0.337px;">WSL: Ubuntu</div>
<svg style="position:absolute;left:112px;top:1013px;" width="14" height="16" viewBox="0 0 14 16"><circle cx="3.5" cy="2.8" r="1.8" fill="none" stroke="#fff" stroke-width="1.1"/><circle cx="3.5" cy="13.2" r="1.8" fill="none" stroke="#fff" stroke-width="1.1"/><circle cx="10.5" cy="5" r="1.8" fill="none" stroke="#fff" stroke-width="1.1"/><path d="M3.5 4.6v6.8M10.5 6.8c0 2.5-2 2.8-4 3.2-1.6.3-3 1-3 2" fill="none" stroke="#fff" stroke-width="1.1"/></svg>
<div id="t38" style="position:absolute;left:129.14px;top:1016px;white-space:pre;font-family:'Liberation Sans', sans-serif;font-size:12px;line-height:12px;color:#ffffff;font-weight:normal;letter-spacing:0.130px;">main*</div>
<svg style="position:absolute;left:166px;top:1014px;" width="15" height="14" viewBox="0 0 15 14"><path d="M2 6.5A5.5 5.5 0 0 1 12 4.5M13 7.5A5.5 5.5 0 0 1 3 9.5" fill="none" stroke="#fff" stroke-width="1.2"/><path d="M12.5 1.5v3.5H9M2.5 12.5V9H6" fill="none" stroke="#fff" stroke-width="1.2"/></svg>
<svg style="position:absolute;left:195px;top:1014px;" width="14" height="14" viewBox="0 0 14 14"><circle cx="6.5" cy="7" r="5.7" fill="none" stroke="#fff" stroke-width="1.1"/><path d="M4.3 4.8l4.4 4.4M8.7 4.8 4.3 9.2" stroke="#fff" stroke-width="1.1"/></svg>
<div id="t39" style="position:absolute;left:212.52px;top:1016px;white-space:pre;font-family:'Liberation Sans', sans-serif;font-size:12px;line-height:12px;color:#ffffff;font-weight:normal;letter-spacing:0.000px;">0</div>
<svg style="position:absolute;left:222px;top:1013px;" width="15" height="15" viewBox="0 0 15 15"><path d="M7.5 1.5 13.8 13H1.2z" fill="none" stroke="#fff" stroke-width="1.1" stroke-linejoin="round"/><path d="M7.5 5.5v4M7.5 10.8v1.2" stroke="#fff" stroke-width="1.1"/></svg>
<div id="t40" style="position:absolute;left:239.15px;top:1016px;white-space:pre;font-family:'Liberation Sans', sans-serif;font-size:12px;line-height:12px;color:#ffffff;font-weight:normal;letter-spacing:0.000px;">0</div>
<svg style="position:absolute;left:263px;top:1013px;" width="13" height="15" viewBox="0 0 13 15"><circle cx="6.5" cy="5.5" r="1.3" fill="#fff"/><path d="M6.5 6.5 3.5 14M6.5 6.5l3 7.5M4.3 11.5h4.4M3.8 2.8a4 4 0 0 0 0 5.4M9.2 2.8a4 4 0 0 1 0 5.4M1.8 1a6.5 6.5 0 0 0 0 9M11.2 1a6.5 6.5 0 0 1 0 9" fill="none" stroke="#fff" stroke-width="1.1"/></svg>
<div id="t41" style="position:absolute;left:278.99px;top:1016px;white-space:pre;font-family:'Liberation Sans', sans-serif;font-size:12px;line-height:12px;color:#ffffff;font-weight:normal;letter-spacing:0.000px;">5</div>
<svg style="position:absolute;left:300px;top:1013px;" width="16" height="16" viewBox="0 0 16 16"><path d="M6 2.5v4M6 2.5 14.5 8 10 10.8" fill="none" stroke="#fff" stroke-width="1.1"/><ellipse cx="5" cy="11.5" rx="2.6" ry="3" fill="none" stroke="#fff" stroke-width="1.1"/><path d="M1 10h8M1 13.5h2M7 13.5h2" stroke="#fff" stroke-width="1"/></svg>
<div id="t42" style="position:absolute;left:318.14px;top:1016px;white-space:pre;font-family:'Liberation Sans', sans-serif;font-size:12px;line-height:12px;color:#ffffff;font-weight:normal;letter-spacing:-0.028px;">Debug Watch (basic-app)</div>
<div id="t43" style="position:absolute;left:838.00px;top:1016px;white-space:pre;font-family:'Liberation Sans', sans-serif;font-size:12px;line-height:12px;color:#ffffff;font-weight:normal;letter-spacing:-0.289px;">Ln 43, Col 1</div>
<div id="t44" style="position:absolute;left:915.99px;top:1016px;white-space:pre;font-family:'Liberation Sans', sans-serif;font-size:12px;line-height:12px;color:#ffffff;font-weight:normal;letter-spacing:-0.601px;">Spaces: 2</div>
<div id="t45" style="position:absolute;left:980.85px;top:1016px;white-space:pre;font-family:'Liberation Sans', sans-serif;font-size:12px;line-height:12px;color:#ffffff;font-weight:normal;letter-spacing:-0.540px;">UTF-8</div>
<div id="t46" style="position:absolute;left:1027.98px;top:1016.5px;white-space:pre;font-family:'Liberation Sans', sans-serif;font-size:11px;line-height:11px;color:#ffffff;font-weight:normal;letter-spacing:-0.710px;">CRLF</div>
<div style="position:absolute;left:1070.00px;top:1015px;white-space:pre;font-family:'Liberation Sans', sans-serif;font-size:12px;line-height:12px;color:#ffffff;font-weight:normal;">{ }</div>
<div id="t47" style="position:absolute;left:1089.16px;top:1016px;white-space:pre;font-family:'Liberation Sans', sans-serif;font-size:12px;line-height:12px;color:#ffffff;font-weight:normal;letter-spacing:-0.499px;">JavaScript</div>
<svg style="position:absolute;left:1155px;top:1013px;" width="14" height="16" viewBox="0 0 14 16"><path d="M3 11.5V6.5a4 4 0 0 1 8 0v5M1.5 12h11" fill="none" stroke="#fff" stroke-width="1.1"/><path d="M5.5 13.2a1.5 1.5 0 0 0 3 0" fill="none" stroke="#fff" stroke-width="1"/></svg>
</body></html>
